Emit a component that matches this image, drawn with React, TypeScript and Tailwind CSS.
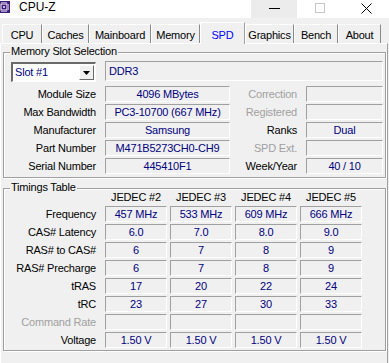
import React from 'react';

const tabs = [
  { name: 'CPU', w: 'w-[40px]' },
  { name: 'Caches', w: 'w-[47px]' },
  { name: 'Mainboard', w: 'w-[62px]' },
  { name: 'Memory', w: 'w-[49px]' },
  { name: 'SPD', w: 'w-[45px]', active: true },
  { name: 'Graphics', w: 'w-[49px]' },
  { name: 'Bench', w: 'w-[44px]' },
  { name: 'About', w: 'w-[43px]' },
];

const slotRows: [string, string, string, string, boolean][] = [
  ['Module Size', '4096 MBytes', 'Correction', '', true],
  ['Max Bandwidth', 'PC3-10700 (667 MHz)', 'Registered', '', true],
  ['Manufacturer', 'Samsung', 'Ranks', 'Dual', false],
  ['Part Number', 'M471B5273CH0-CH9', 'SPD Ext.', '', true],
  ['Serial Number', '445410F1', 'Week/Year', '40 / 10', false],
];

const timings: { label: string; vals: string[]; dim?: boolean }[] = [
  { label: 'Frequency', vals: ['457 MHz', '533 MHz', '609 MHz', '666 MHz'] },
  { label: 'CAS# Latency', vals: ['6.0', '7.0', '8.0', '9.0'] },
  { label: 'RAS# to CAS#', vals: ['6', '7', '8', '9'] },
  { label: 'RAS# Precharge', vals: ['6', '7', '8', '9'] },
  { label: 'tRAS', vals: ['17', '20', '22', '24'] },
  { label: 'tRC', vals: ['23', '27', '30', '33'] },
  { label: 'Command Rate', vals: ['', '', '', ''], dim: true },
  { label: 'Voltage', vals: ['1.50 V', '1.50 V', '1.50 V', '1.50 V'] },
];

function Field({ value, className }: { value: string; className: string }) {
  return (
    <div
      className={`${className} flex items-center border border-t-[#a0a0a0] border-l-[#a0a0a0] border-b-white border-r-white text-[#000080] whitespace-nowrap overflow-hidden`}
    >
      {value}
    </div>
  );
}

function GroupBox({ title, className, children }: { title: string; className: string; children: React.ReactNode }) {
  return (
    <div className={`relative ml-[2px] w-[383px] border border-[#a0a0a0] shadow-[inset_1px_1px_0_#fff,1px_1px_0_#fff] ${className}`}>
      <span className="absolute left-[6px] top-[-8px] px-[1px] bg-[#f0f0f0] leading-[13px] text-black">{title}</span>
      {children}
    </div>
  );
}

function CpuzIcon() {
  return (
    <svg width="12" height="12" viewBox="0 0 12 12" className="-ml-[2px] mt-[1px]">
      <rect x="0" y="0" width="12" height="12" fill="#3f1d7a" />
      <rect x="3" y="3" width="6" height="6" fill="none" stroke="#fff" strokeWidth="1" />
      <rect x="5" y="5" width="2" height="2" fill="#c9b8ff" />
      <path d="M4 1v1M6 1v1M8 1v1M4 10v1M6 10v1M8 10v1M1 4h1M1 6h1M1 8h1M10 4h1M10 6h1M10 8h1" stroke="#fff" strokeWidth="1" />
    </svg>
  );
}

export default function App() {
  return (
    <div className="w-[389px] h-[363px] overflow-hidden bg-[#f0f0f0] font-[family-name:'Liberation_Sans',Arial,sans-serif] text-[11px] tracking-[-0.2px] text-black">
      {/* Title bar */}
      <div className="h-[18px] bg-white flex items-start">
        <CpuzIcon />
        <span className="ml-[9px] text-[12px] leading-[14px] tracking-normal">CPU-Z</span>
        <div className="flex-1" />
        <div className="w-[46px] h-[18px] bg-[#ececec] flex items-center justify-center">
          <div className="w-[11px] h-px bg-black mb-[2px]" />
        </div>
        <div className="w-[46px] h-[18px] flex items-center justify-center">
          <div className="w-[10px] h-[10px] border border-[#c8c8c8] mb-[2px]" />
        </div>
        <div className="w-[46px] h-[18px] flex items-center justify-center shrink-0">
          <svg width="11" height="11" viewBox="0 0 11 11" className="mb-[2px]">
            <path d="M0.5 0.5L10.5 10.5M10.5 0.5L0.5 10.5" stroke="#000" strokeWidth="1" />
          </svg>
        </div>
      </div>

      {/* Tabs */}
      <div className="h-[25px] flex items-end pl-[2px]">
        {tabs.map((t) =>
          t.active ? (
            <div
              key={t.name}
              className={`${t.w} h-[22px] -mb-px relative z-10 bg-[#f0f0f0] border-l border-t border-white border-r border-r-[#a0a0a0] flex justify-center pt-[4px] text-[#0000ff]`}
            >
              {t.name}
            </div>
          ) : (
            <div
              key={t.name}
              className={`${t.w} h-[19px] border-l border-t border-white border-r border-r-[#8a8a8a] flex justify-center pt-[2px]`}
            >
              {t.name}
            </div>
          )
        )}
      </div>

      {/* Tab page */}
      <div className="w-[388px] h-[330px] border-t border-l border-white border-r border-r-[#a0a0a0] pt-[8px]">
        <GroupBox title="Memory Slot Selection" className="h-[126px] pt-[8px]">
          <div className="flex items-start">
            <div className="ml-[7px] mt-[1px] w-[85px] h-[20px] bg-white border-t-2 border-l-2 border-t-[#6a6a6a] border-l-[#6a6a6a] border-b border-r border-b-white border-r-white flex items-center">
              <span className="flex-1 pl-[2px] text-[#000080]">Slot #1</span>
              <div className="w-[15px] h-[15px] mr-[1px] bg-[#f0f0f0] border border-t-white border-l-white border-b-[#6a6a6a] border-r-[#6a6a6a] flex items-center justify-center">
                <svg width="7" height="4" viewBox="0 0 7 4">
                  <path d="M0 0H7L3.5 4Z" fill="#000" />
                </svg>
              </div>
            </div>
            <Field value="DDR3" className="ml-[9px] w-[278px] h-[20px] justify-start pl-[3px]" />
          </div>
          <div className="mt-[4px] flex flex-col gap-[2px]">
            {slotRows.map(([l, v, rl, rv, dim]) => (
              <div key={l} className="flex items-center h-[16px]">
                <div className="w-[92px] text-right">{l}</div>
                <Field value={v} className="ml-[9px] w-[125px] h-[16px] justify-center" />
                <div className={`w-[67px] text-right ${dim ? 'text-[#a0a0a0]' : 'text-black'}`}>{rl}</div>
                <Field value={rv} className="ml-[9px] w-[77px] h-[16px] justify-center" />
              </div>
            ))}
          </div>
        </GroupBox>

        <GroupBox title="Timings Table" className="mt-[10px] h-[163px]">
          <div className="flex h-[17px] items-center">
            <div className="w-[92px]" />
            <div className="ml-[9px] flex gap-[3px]">
              {['JEDEC #2', 'JEDEC #3', 'JEDEC #4', 'JEDEC #5'].map((h) => (
                <div key={h} className="w-[62px] text-center">{h}</div>
              ))}
            </div>
          </div>
          <div className="flex flex-col gap-[2px]">
            {timings.map((r) => (
              <div key={r.label} className="flex items-center h-[16px]">
                <div className={`w-[92px] text-right ${r.dim ? 'text-[#a0a0a0]' : 'text-black'}`}>{r.label}</div>
                <div className="ml-[9px] flex gap-[3px]">
                  {r.vals.map((v, i) => (
                    <Field key={i} value={v} className="w-[62px] h-[16px] justify-center" />
                  ))}
                </div>
              </div>
            ))}
          </div>
        </GroupBox>
      </div>
    </div>
  );
}
